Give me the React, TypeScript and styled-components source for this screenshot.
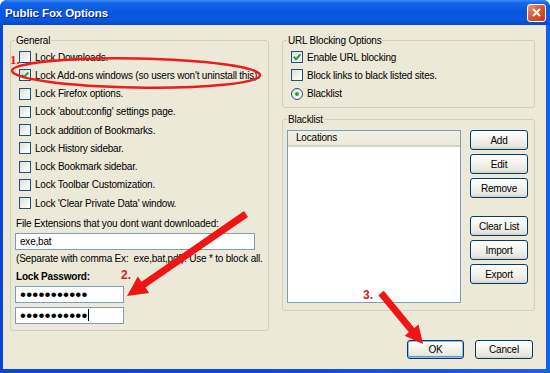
import React from 'react';
import styled, { createGlobalStyle } from 'styled-components';

const FONT = `"Liberation Sans", Arial, sans-serif`;

const GlobalStyle = createGlobalStyle`
  html, body {
    margin: 0;
    padding: 0;
    background: #fff;
  }
  body {
    font-family: ${FONT};
    font-size: 10px;
    letter-spacing: -0.2px;
    color: #000;
  }
`;

const Window = styled.div`
  position: relative;
  width: 550px;
  height: 373px;
  display: flex;
  flex-direction: column;
  background: linear-gradient(90deg, #0b45d3 0%, #0a4ad8 50%, #1d5ee6 100%);
  border-radius: 7px 7px 0 0;
  overflow: hidden;
`;

const TitleBar = styled.div`
  flex: none;
  height: 25px;
  display: flex;
  align-items: center;
  justify-content: space-between;
  padding: 0 4px 0 5px;
  background: linear-gradient(#3d8df5 0%, #1466e8 12%, #0758e0 45%, #0a57dd 80%, #0747c9 100%);
`;

const Title = styled.span`
  color: #fff;
  font: bold 11.5px ${FONT};
  letter-spacing: -0.1px;
  text-shadow: 1px 1px 0 #0a1e8a;
  margin-top: 1px;
`;

const CloseButton = styled.div`
  width: 19px;
  height: 18px;
  box-sizing: border-box;
  border: 1px solid #fff;
  border-radius: 3px;
  background: linear-gradient(135deg, #ec9a78 0%, #d85a34 45%, #c2380f 100%);
  display: flex;
  align-items: center;
  justify-content: center;
`;

const Body = styled.div`
  flex: 1;
  margin: 0 4px 4px 3px;
  background: #ece9d8;
  display: grid;
  grid-template-columns: 259px 253px;
  column-gap: 13px;
  align-items: start;
  padding: 9px 0 0 7px;
`;

const GroupBox = styled.fieldset<{ $height: number }>`
  margin: 0;
  min-width: 0;
  height: ${p => p.$height}px;
  box-sizing: border-box;
  border: 1px solid #d0d0bf;
  border-radius: 3px;
  padding: 0 5px 0 4px;
`;

const Legend = styled.legend`
  padding: 0 1px;
  line-height: 13px;
`;

const OptionList = styled.div`
  display: flex;
  flex-direction: column;
  margin: 1px 0 0 4px;
`;

const Option = styled.label`
  display: flex;
  align-items: center;
  gap: 4px;
  height: 18.25px;
  white-space: nowrap;
`;

const Box = styled.span`
  flex: none;
  width: 12px;
  height: 12px;
  box-sizing: border-box;
  border: 1px solid #1c5180;
  background: linear-gradient(135deg, #dcdcd7 0%, #f4f4f2 60%, #fff 100%);
  display: flex;
  align-items: center;
  justify-content: center;
`;

const Radio = styled(Box)`
  border-radius: 50%;
`;

const RadioDot = styled.span`
  width: 4px;
  height: 4px;
  border-radius: 50%;
  background: #2aa22a;
`;

const Column = styled.div`
  display: flex;
  flex-direction: column;
`;

const FieldLabel = styled.div<{ $gap: number; $bold?: boolean }>`
  margin-top: ${p => p.$gap}px;
  padding-left: 1px;
  line-height: 13px;
  font-weight: ${p => (p.$bold ? 'bold' : 'normal')};
  white-space: pre;
`;

const TextBox = styled.div<{ $width: number; $gap: number }>`
  width: ${p => p.$width}px;
  height: 17px;
  margin-top: ${p => p.$gap}px;
  box-sizing: border-box;
  border: 1px solid #7f9db9;
  background: #fff;
  padding: 0 4px;
  display: flex;
  align-items: center;
  white-space: pre;
`;

const Dots = styled.span`
  font-size: 17px;
  letter-spacing: 0.2px;
  line-height: 15px;
`;

const Caret = styled.span`
  width: 1px;
  height: 12px;
  background: #000;
`;

const ListArea = styled.div`
  display: flex;
  gap: 9px;
  margin-top: 4px;
`;

const ListBox = styled.div`
  width: 174px;
  height: 173px;
  box-sizing: border-box;
  border: 1px solid #7f9db9;
  background: #fff;
`;

const ListHeader = styled.div`
  height: 16px;
  box-sizing: border-box;
  padding-left: 8px;
  line-height: 14px;
  background: linear-gradient(#f1efe2, #ebeadb);
  border-bottom: 2px solid #d6d2c2;
`;

const ButtonColumn = styled.div`
  display: flex;
  flex-direction: column;
  gap: 4px;
`;

const Button = styled.div<{ $width?: number; $height?: number; $default?: boolean; $gap?: number }>`
  width: ${p => p.$width ?? 58}px;
  height: ${p => p.$height ?? 20}px;
  margin-top: ${p => p.$gap ?? 0}px;
  box-sizing: border-box;
  border: 1px solid #003c74;
  border-radius: 3px;
  background: linear-gradient(#ffffff 0%, #f5f4ef 40%, #e8e6dc 85%, #d6d0c5 100%);
  box-shadow: ${p => (p.$default ? 'inset 0 0 0 1px #98b8ea, inset 0 -1px 0 1px #6b8fdb' : 'none')};
  display: flex;
  align-items: center;
  justify-content: center;
  white-space: nowrap;
`;

const Footer = styled.div`
  display: flex;
  justify-content: flex-end;
  gap: 11px;
  margin-top: 29px;
  padding-right: 2px;
`;

const Overlay = styled.svg`
  position: absolute;
  left: 0;
  top: 0;
  pointer-events: none;
  letter-spacing: 0;
`;

const Check = () => (
  <svg width="10" height="10" viewBox="0 0 10 10">
    <polyline points="1.8,4.8 4,7.2 8.4,2.4" fill="none" stroke="#21a121" strokeWidth="2" />
  </svg>
);

const CheckOption = ({ label, checked }: { label: string; checked?: boolean }) => (
  <Option>
    <Box>{checked && <Check />}</Box>
    {label}
  </Option>
);

function arrowPoints(sx: number, sy: number, tx: number, ty: number, shaft: number, headLen: number, headW: number) {
  const dx = tx - sx;
  const dy = ty - sy;
  const len = Math.hypot(dx, dy);
  const ux = dx / len;
  const uy = dy / len;
  const px = -uy;
  const py = ux;
  const bx = tx - ux * headLen;
  const by = ty - uy * headLen;
  const s = shaft / 2;
  const h = headW / 2;
  const pts = [
    [sx + px * s, sy + py * s],
    [bx + px * s, by + py * s],
    [bx + px * h, by + py * h],
    [tx, ty],
    [bx - px * h, by - py * h],
    [bx - px * s, by - py * s],
    [sx - px * s, sy - py * s],
  ];
  return pts.map(p => p.map(v => v.toFixed(1)).join(',')).join(' ');
}

const lockOptions = [
  'Lock Downloads.',
  "Lock Add-ons windows (so users won't uninstall this).",
  'Lock Firefox options.',
  "Lock 'about:config' settings page.",
  'Lock addition of Bookmarks.',
  'Lock History sidebar.',
  'Lock Bookmark sidebar.',
  'Lock Toolbar Customization.',
  "Lock 'Clear Private Data' window.",
];

export default function App() {
  return (
    <>
      <GlobalStyle />
      <Window>
        <TitleBar>
          <Title>Public Fox Options</Title>
          <CloseButton>
            <svg width="11" height="11" viewBox="0 0 11 11">
              <path d="M2 2L9 9M9 2L2 9" stroke="#fff" strokeWidth="2" />
            </svg>
          </CloseButton>
        </TitleBar>

        <Body>
          <GroupBox $height={297}>
            <Legend>General</Legend>
            <OptionList>
              {lockOptions.map((o, i) => (
                <CheckOption key={o} label={o} checked={i === 1} />
              ))}
            </OptionList>
            <FieldLabel $gap={5}>File Extensions that you dont want downloaded:</FieldLabel>
            <TextBox $width={240} $gap={2.5}>exe,bat</TextBox>
            <FieldLabel $gap={2.5}>(Separate with comma Ex:  exe,bat,pdf). Use * to block all.</FieldLabel>
            <FieldLabel $gap={5} $bold>Lock Password:</FieldLabel>
            <TextBox $width={109} $gap={2.5}>
              <Dots>•••••••••••</Dots>
            </TextBox>
            <TextBox $width={109} $gap={4}>
              <Dots>•••••••••••</Dots>
              <Caret />
            </TextBox>
          </GroupBox>

          <Column>
            <GroupBox $height={74}>
              <Legend>URL Blocking Options</Legend>
              <OptionList>
                <CheckOption label="Enable URL blocking" checked />
                <CheckOption label="Block links to black listed sites." />
                <Option>
                  <Radio>
                    <RadioDot />
                  </Radio>
                  Blacklist
                </Option>
              </OptionList>
            </GroupBox>

            <GroupBox $height={198} style={{ marginTop: 5 }}>
              <Legend>Blacklist</Legend>
              <ListArea>
                <ListBox>
                  <ListHeader>Locations</ListHeader>
                </ListBox>
                <ButtonColumn>
                  <Button>Add</Button>
                  <Button>Edit</Button>
                  <Button>Remove</Button>
                  <Button $gap={14}>Clear List</Button>
                  <Button>Import</Button>
                  <Button>Export</Button>
                </ButtonColumn>
              </ListArea>
            </GroupBox>

            <Footer>
              <Button $width={57} $height={19} $default>OK</Button>
              <Button $height={19}>Cancel</Button>
            </Footer>
          </Column>
        </Body>

        <Overlay width="550" height="373" viewBox="0 0 550 373">
          <ellipse
            cx="136"
            cy="73"
            rx="124"
            ry="14.5"
            fill="none"
            stroke="#ec1c1c"
            strokeWidth="2.5"
            transform="rotate(1 136 73)"
          />
          <text x="10" y="64" fill="#e01818" fontFamily="'Liberation Serif', serif" fontWeight="bold" fontSize="13">
            1.
          </text>
          <text x="121" y="279" fill="#e01818" fontFamily={FONT} fontWeight="bold" fontSize="12">
            2.
          </text>
          <text x="363" y="299" fill="#e01818" fontFamily={FONT} fontWeight="bold" fontSize="12">
            3.
          </text>
          <polygon points={arrowPoints(246, 214, 127, 296, 7, 20, 20)} fill="#f01414" />
          <polygon points={arrowPoints(381, 293, 423, 344, 7, 18, 18)} fill="#f01414" />
        </Overlay>
      </Window>
    </>
  );
}
